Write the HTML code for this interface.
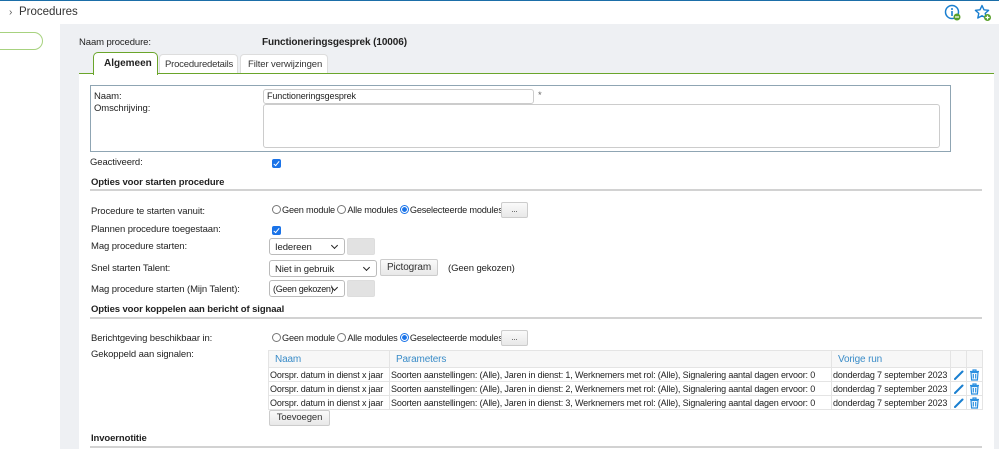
<!DOCTYPE html>
<html><head><meta charset="utf-8"><style>
*{box-sizing:border-box;margin:0;padding:0}
body{width:999px;height:449px;overflow:hidden;background:#eef0f3;font-family:"Liberation Sans","DejaVu Sans",sans-serif;font-size:9.5px;letter-spacing:-0.1px;color:#222;position:relative}
.a{position:absolute;white-space:nowrap}
.b{font-weight:bold}
.inp{position:absolute;border:1px solid #ccc;border-radius:3px;background:#fff}
.btn{position:absolute;border:1px solid #ccc;border-radius:2px;background:linear-gradient(#fafafa,#e8e8e8);text-align:center;color:#333}
.dis{position:absolute;background:#e2e2e2;border-radius:2px;border:1px solid #ddd}
.sel{position:absolute;border:1px solid #bbb;border-radius:3px;background:#fff;padding:3px 5px;overflow:hidden;white-space:nowrap}
.sel:after{content:"";position:absolute;right:7px;top:4px;width:4px;height:4px;border-right:1.5px solid #222;border-bottom:1.5px solid #222;transform:rotate(45deg)}
.cb{position:absolute;width:9px;height:9px;background:#1a73e8;border-radius:2px}
.cb:after{content:"";position:absolute;left:3px;top:1px;width:2px;height:5px;border:solid #fff;border-width:0 1.5px 1.5px 0;transform:rotate(40deg)}
.rad{display:inline-block;width:9px;height:9px;border:1px solid #777;border-radius:50%;vertical-align:-1px;margin-right:1px;background:#fff}
.rad.on{border-color:#1a73e8;background:radial-gradient(#1a73e8 0 2.2px,#fff 2.6px)}
.line{position:absolute;height:2px;background:#d2d2d2}
table{position:absolute;border-collapse:collapse;font-size:9px;letter-spacing:-0.15px;table-layout:fixed}
td{border:1px solid #e4e4e4;height:14px;padding:0 1px;white-space:nowrap;overflow:hidden}
th{height:17px;border:1px solid #e4e4e4;background:#f7f7f7;color:#3a8cc8;font-weight:normal;text-align:left;padding:0 6px;font-size:10px}
td svg{display:block;margin:0 auto}
.rl{font-size:9.2px;letter-spacing:-0.2px}
</style></head><body>
<div class="a" style="left:0;top:0;width:999px;height:24px;background:#fff;border-top:1px solid #1b6ea8"></div>
<div class="a" style="left:9px;top:7px;font-size:10px;color:#555">›</div>
<div class="a" style="left:19px;top:5px;font-size:11.5px;color:#333;letter-spacing:0;line-height:14px">Procedures</div>
<svg class="a" style="left:944px;top:4px" width="18" height="18" viewBox="0 0 18 18"><circle cx="8" cy="8" r="6.5" fill="none" stroke="#1a7fd0" stroke-width="1.5"/><rect x="7.2" y="7" width="1.6" height="5" fill="#1a7fd0"/><circle cx="8" cy="5" r="1" fill="#1a7fd0"/><circle cx="13" cy="13" r="3.5" fill="#5aa02c"/><rect x="11" y="12.4" width="4" height="1.2" fill="#fff"/></svg>
<svg class="a" style="left:974px;top:4px" width="18" height="18" viewBox="0 0 18 18"><path d="M8 1.5l2 4.3 4.6.5-3.4 3.1 1 4.6L8 11.7 3.8 14l1-4.6L1.4 6.3l4.6-.5z" fill="none" stroke="#1a7fd0" stroke-width="1.4" stroke-linejoin="round"/><circle cx="13.5" cy="13.5" r="3.5" fill="#5aa02c"/><rect x="11.5" y="12.9" width="4" height="1.2" fill="#fff"/><rect x="12.9" y="11.5" width="1.2" height="4" fill="#fff"/></svg>
<div class="a" style="left:0;top:24px;width:60px;height:425px;background:#fff"></div>
<div class="a" style="left:-10px;top:32px;width:53px;height:18px;border:1.5px solid #a7d27f;border-radius:9px;background:#fff"></div>
<div class="a" style="left:79px;top:37px">Naam procedure:</div>
<div class="a b" style="left:262px;top:37px;font-size:10px">Functioneringsgesprek (10006)</div>
<div class="a" style="left:79px;top:73px;width:915px;height:376px;background:#fff;border-top:1.5px solid #6aa52a"></div>
<div class="a" style="left:93px;top:52px;width:65px;height:23px;background:#fff;border:1.5px solid #6aa52a;border-bottom:none;border-radius:5px 5px 0 0"></div>
<div class="a b" style="left:104px;top:58px;font-size:10px;letter-spacing:0">Algemeen</div>
<div class="a" style="left:159px;top:54px;width:79px;height:19px;background:#fff;border:1px solid #ddd;border-bottom:none;border-radius:4px 4px 0 0;padding:4px 5px;color:#333;letter-spacing:-0.2px">Proceduredetails</div>
<div class="a" style="left:240px;top:54px;width:88px;height:19px;background:#fff;border:1px solid #ddd;border-bottom:none;border-radius:4px 4px 0 0;padding:4px 7px;color:#333">Filter verwijzingen</div>

<div class="a" style="left:90px;top:85px;width:861px;height:67px;border:1px solid #8fa5b3"></div>
<div class="a" style="left:94px;top:91px">Naam:</div>
<div class="a" style="left:94px;top:103px">Omschrijving:</div>
<div class="inp" style="left:263px;top:89px;width:271px;height:15px;padding:1px 3px;font-size:9px">Functioneringsgesprek</div>
<div class="a" style="left:538px;top:90px;color:#666">*</div>
<div class="inp" style="left:263px;top:104px;width:677px;height:44px"></div>

<div class="a" style="left:90px;top:157px">Geactiveerd:</div>
<div class="cb" style="left:272px;top:159px"></div>
<div class="a b" style="left:91px;top:177px">Opties voor starten procedure</div>
<div class="line" style="left:90px;top:189px;width:892px"></div>

<div class="a" style="left:91px;top:206px">Procedure te starten vanuit:</div>
<div class="a rl" style="left:272px;top:205px"><span class="rad"></span>Geen module <span class="rad"></span>Alle modules <span class="rad on"></span>Geselecteerde modules</div>
<div class="btn" style="left:501px;top:202px;width:27px;height:16px;font-size:8px;line-height:13px">...</div>
<div class="a" style="left:91px;top:224px">Plannen procedure toegestaan:</div>
<div class="cb" style="left:272px;top:226px"></div>
<div class="a" style="left:91px;top:241px">Mag procedure starten:</div>
<div class="sel" style="left:269px;top:238px;width:76px;height:17px">Iedereen</div>
<div class="dis" style="left:347px;top:238px;width:28px;height:17px"></div>
<div class="a" style="left:91px;top:263px">Snel starten Talent:</div>
<div class="sel" style="left:269px;top:260px;width:108px;height:17px">Niet in gebruik</div>
<div class="btn" style="left:380px;top:259px;width:58px;height:17px;line-height:15px;font-size:10px">Pictogram</div>
<div class="a" style="left:448px;top:263px">(Geen gekozen)</div>
<div class="a" style="left:91px;top:284px">Mag procedure starten (Mijn Talent):</div>
<div class="sel" style="left:269px;top:280px;width:76px;height:17px;padding:3px 3px;font-size:9px;letter-spacing:-0.3px">(Geen gekozen)</div>
<div class="dis" style="left:347px;top:280px;width:28px;height:17px"></div>

<div class="a b" style="left:91px;top:304px">Opties voor koppelen aan bericht of signaal</div>
<div class="line" style="left:90px;top:317px;width:892px"></div>
<div class="a" style="left:91px;top:333px">Berichtgeving beschikbaar in:</div>
<div class="a rl" style="left:272px;top:333px"><span class="rad"></span>Geen module <span class="rad"></span>Alle modules <span class="rad on"></span>Geselecteerde modules</div>
<div class="btn" style="left:501px;top:330px;width:27px;height:16px;font-size:8px;line-height:13px">...</div>
<div class="a" style="left:91px;top:349px">Gekoppeld aan signalen:</div>

<table style="left:268px;top:350px;width:714px">
<tr><th style="width:121px">Naam</th><th style="width:442px">Parameters</th><th style="width:119px">Vorige run</th><th style="width:16px"></th><th style="width:16px"></th></tr>
<tr><td>Oorspr. datum in dienst x jaar</td><td>Soorten aanstellingen: (Alle), Jaren in dienst: 1, Werknemers met rol: (Alle), Signalering aantal dagen ervoor: 0</td><td>donderdag 7 september 2023</td><td><svg width="10" height="10" viewBox="0 0 10 10"><path d="M1 9L8.5 1.5" stroke="#1a7fd0" stroke-width="2" stroke-linecap="round"/></svg></td><td><svg width="11" height="12" viewBox="0 0 11 12"><path d="M1 2.5h9M4 2.5V1h3v1.5M2 3.5h7l-.6 7.5H2.6z M4.3 5v4.5M6.7 5v4.5" fill="none" stroke="#2a8fe0" stroke-width="1.2"/></svg></td></tr>
<tr><td>Oorspr. datum in dienst x jaar</td><td>Soorten aanstellingen: (Alle), Jaren in dienst: 2, Werknemers met rol: (Alle), Signalering aantal dagen ervoor: 0</td><td>donderdag 7 september 2023</td><td><svg width="10" height="10" viewBox="0 0 10 10"><path d="M1 9L8.5 1.5" stroke="#1a7fd0" stroke-width="2" stroke-linecap="round"/></svg></td><td><svg width="11" height="12" viewBox="0 0 11 12"><path d="M1 2.5h9M4 2.5V1h3v1.5M2 3.5h7l-.6 7.5H2.6z M4.3 5v4.5M6.7 5v4.5" fill="none" stroke="#2a8fe0" stroke-width="1.2"/></svg></td></tr>
<tr><td>Oorspr. datum in dienst x jaar</td><td>Soorten aanstellingen: (Alle), Jaren in dienst: 3, Werknemers met rol: (Alle), Signalering aantal dagen ervoor: 0</td><td>donderdag 7 september 2023</td><td><svg width="10" height="10" viewBox="0 0 10 10"><path d="M1 9L8.5 1.5" stroke="#1a7fd0" stroke-width="2" stroke-linecap="round"/></svg></td><td><svg width="11" height="12" viewBox="0 0 11 12"><path d="M1 2.5h9M4 2.5V1h3v1.5M2 3.5h7l-.6 7.5H2.6z M4.3 5v4.5M6.7 5v4.5" fill="none" stroke="#2a8fe0" stroke-width="1.2"/></svg></td></tr>
</table>
<div class="btn" style="left:269px;top:410px;width:61px;height:16px;line-height:14px">Toevoegen</div>
<div class="a b" style="left:91px;top:433px">Invoernotitie</div>
<div class="line" style="left:90px;top:446px;width:892px"></div>
</body></html>
